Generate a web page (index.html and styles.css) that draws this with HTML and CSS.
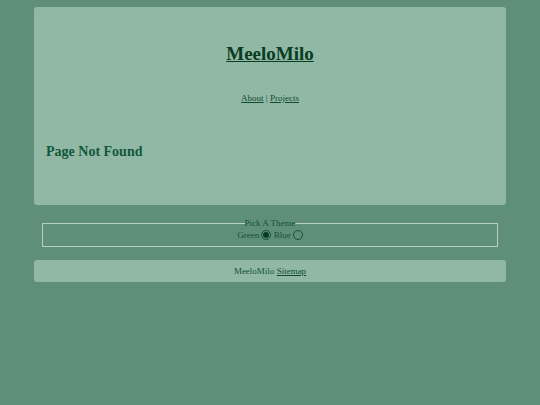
FILE: index.html
```html
<!DOCTYPE html>
<html>
<head>
<meta charset="utf-8">
<link rel="stylesheet" href="styles.css">
</head>
<body>
<div class="page">
  <main class="card main">
    <header class="head">
      <h1 class="title"><a href="#">MeeloMilo</a></h1>
      <nav class="nav"><a href="#">About</a> | <a href="#">Projects</a></nav>
    </header>
    <h2 class="nf">Page Not Found</h2>
  </main>
  <fieldset class="theme">
    <legend>Pick A Theme</legend>
    <label>Green <span class="radio on"></span></label>
    <label>Blue <span class="radio"></span></label>
  </fieldset>
  <footer class="card foot">MeeloMilo <a href="#">Sitemap</a></footer>
</div>
</body>
</html>
```
FILE: styles.css
```css
html, body { margin: 0; padding: 0; }
body {
  background: #5f8f78;
  font-family: "Liberation Serif", Georgia, serif;
  color: #0e4a2e;
}
a { color: #0e4a2e; }
.page {
  width: 472px;
  margin: 0 auto;
  padding-top: 7px;
}
.card {
  background: #91b8a5;
  border-radius: 3px;
}
.main {
  height: 198px;
  box-sizing: border-box;
  padding: 36px 12px 0;
}
.head { text-align: center; }
.title {
  margin: 0;
  font-size: 19px;
  font-weight: bold;
  line-height: 22px;
}
.title a { color: #083d23; }
.nav {
  margin-top: 27px;
  font-size: 9px;
  line-height: 12px;
}
.nf {
  margin: 40px 0 0;
  font-size: 14px;
  line-height: 16px;
  color: #11573a;
}
.theme {
  margin: 12px 8px 0;
  padding: 0 4px 5px;
  border: 1px solid #b5d0c2;
  text-align: center;
  font-size: 9px;
  line-height: 12px;
  color: #14523a;
}
.theme legend { padding: 0; font-size: 9px; line-height: 12px; }
.theme label { display: inline-flex; align-items: center; gap: 2px; vertical-align: top; }
.radio {
  display: inline-block;
  width: 8px; height: 8px;
  border: 1px solid #14523a;
  border-radius: 50%;
  box-sizing: content-box;
  position: relative;
}
.radio.on::after {
  content: "";
  position: absolute;
  left: 1px; top: 1px;
  width: 6px; height: 6px;
  border-radius: 50%;
  background: #083d23;
}
.foot {
  margin-top: 13px;
  height: 22px;
  line-height: 22px;
  text-align: center;
  font-size: 9px;
  color: #14523a;
}
```
